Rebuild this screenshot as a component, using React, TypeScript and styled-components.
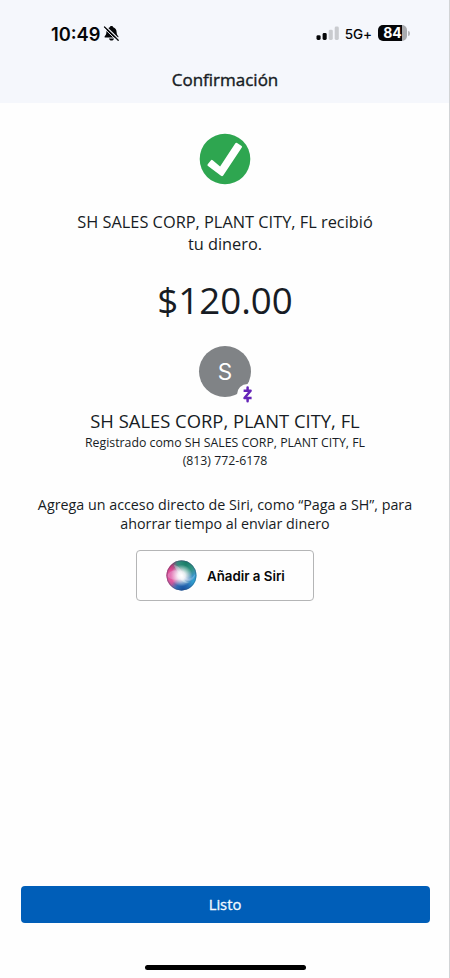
import React from "react";
import styled, { createGlobalStyle } from "styled-components";

const GlobalStyle = createGlobalStyle`
  *, *::before, *::after { box-sizing: border-box; }
  body { margin: 0; background: #fff; }
  button { font: inherit; }
`;

const Screen = styled.main`
  display: flex;
  flex-direction: column;
  width: 450px;
  height: 978px;
  overflow: hidden;
  border-right: 1px solid #d2d4d6;
  background: #fefefe;
  color: #171c24;
  font-family: "Open Sans", "Noto Sans", sans-serif;
`;

const Header = styled.header`
  flex: none;
  height: 103px;
  background: #f5f7fc;
`;

const StatusBar = styled.div`
  display: flex;
  align-items: center;
  justify-content: space-between;
  height: 58px;
  padding: 9px 39px 0 51px;
  color: #050608;
  font-family: Inter, sans-serif;
`;

const StatusGroup = styled.div`
  display: flex;
  align-items: center;
`;

const Clock = styled.span`
  margin-right: 2px;
  font-size: 18.3px;
  font-weight: 600;
  line-height: 22px;
`;

const Network = styled.span`
  margin: 1px 6px 0 6px;
  font-size: 13.5px;
  font-weight: 500;
  line-height: 18px;
  letter-spacing: -0.1px;
`;

const Battery = styled.div`
  display: flex;
  align-items: center;
  gap: 1px;
  margin-bottom: 1px;
  &::after {
    content: "";
    width: 2px;
    height: 5px;
    border-radius: 0 2px 2px 0;
    background: #b5b7bb;
  }
`;

const BatteryCell = styled.div`
  display: flex;
  align-items: center;
  justify-content: center;
  width: 29px;
  height: 16px;
  border-radius: 5px;
  background: linear-gradient(to right, #050608 84%, #a9abaf 84%);
  color: #fff;
  font-size: 14px;
  font-weight: 700;
  line-height: 16px;
`;

const Title = styled.h1`
  margin: 10px 0 0;
  padding-left: 1px;
  font-size: 17px;
  font-weight: 400;
  line-height: 24px;
  text-align: center;
  -webkit-text-stroke: 0.4px currentColor;
`;

const Content = styled.section`
  display: flex;
  flex: 1;
  flex-direction: column;
  align-items: center;
  padding: 30px 0 0 1px;
  text-align: center;
`;

const TextBlock = styled.p<{ $size: number; $line: number; $top: number }>`
  margin: ${(p) => p.$top}px 0 0;
  font-size: ${(p) => p.$size}px;
  line-height: ${(p) => p.$line}px;
  white-space: nowrap;
`;

const Avatar = styled.div`
  position: relative;
  display: flex;
  align-items: center;
  justify-content: center;
  width: 52px;
  height: 51px;
  margin-top: 21px;
  border-radius: 50%;
  background: #808386;
  color: #fff;
  font-family: Inter, sans-serif;
  font-size: 22.5px;
`;

const Badge = styled.span`
  position: absolute;
  left: 38px;
  top: 38px;
  display: flex;
  align-items: center;
  justify-content: center;
  width: 21px;
  height: 21px;
  border-radius: 50%;
  background: #fefefe;
`;

const SiriButton = styled.button`
  display: flex;
  align-items: center;
  width: 178px;
  height: 51px;
  margin-top: 17px;
  padding: 0 0 0 29px;
  gap: 10px;
  border: 1px solid #b4b5b6;
  border-radius: 4px;
  background: #fefefe;
  color: #080808;
  font-family: Inter, sans-serif;
  font-size: 13.3px;
  font-weight: 600;
  white-space: nowrap;
`;

const Footer = styled.footer`
  display: flex;
  flex: none;
  flex-direction: column;
  align-items: center;
  height: 92px;
  padding-left: 1px;
`;

const DoneButton = styled.button`
  width: 409px;
  height: 37px;
  padding: 0;
  border: 0;
  border-radius: 4px;
  background: #005eb8;
  color: #f3faff;
  font-size: 14.8px;
  font-weight: 400;
  line-height: 37px;
  -webkit-text-stroke: 0.3px currentColor;
`;

const HomeIndicator = styled.div`
  width: 161px;
  height: 5px;
  margin-top: 42px;
  border-radius: 3px;
  background: #000;
`;

const MutedBell = () => (
  <svg width="17" height="17" viewBox="0 0 17 17">
    <path d="M8.5 1.1c.9 0 1.500.5 1.700 1.200 2.100.7 3.300 2.300 3.400 4.600.1 2.200.6 3.100 1.500 4 .7.8.3 1.700-.6 1.700H2.500c-.9 0-1.300-.9-.6-1.700.9-.9 1.400-1.800 1.500-4 .1-2.300 1.300-3.900 3.400-4.600.2-.7.800-1.200 1.700-1.200Z" fill="#050608" />
    <path d="M6 13.500h5c-.2 1.300-1.200 2.100-2.500 2.100S6.200 14.800 6 13.500Z" fill="#050608" />
    <path d="M2.500 1.200 16 14.300" stroke="#f5f7fc" strokeWidth="1.300" />
    <path d="M1.500 2 15.200 15.300" stroke="#050608" strokeWidth="1.300" strokeLinecap="round" />
    <path d="M.8 3 14.200 16" stroke="#f5f7fc" strokeWidth="0.900" />
  </svg>
);

const Signal = () => (
  <svg width="23" height="15" viewBox="0 0 23 15">
    <rect x="0.500" y="9.200" width="4.100" height="4.800" rx="1.400" fill="#050608" />
    <rect x="6.600" y="7" width="4.100" height="7" rx="1.400" fill="#050608" />
    <rect x="12.700" y="3.700" width="4.100" height="10.300" rx="1.400" fill="#c9cbcf" />
    <rect x="18.700" y="0.500" width="4.100" height="13.500" rx="1.400" fill="#c9cbcf" />
  </svg>
);

const SuccessMark = () => (
  <svg width="52" height="52" viewBox="0 0 52 52">
    <circle cx="26" cy="26" r="25.300" fill="#2ea650" />
    <path
      d="M8.700 31.200 12 27.200Q12.800 26.400 13.700 27.200L21.100 33.400 36.200 10.400Q37 9.300 38.100 10L42.600 12.900Q43.500 13.600 42.800 14.600L24.200 42.400Q23.200 43.700 22 42.700L9 33Q7.900 32.200 8.700 31.200Z"
      fill="#fff"
    />
  </svg>
);

const ZelleMark = () => (
  <svg width="11" height="17" viewBox="0 0 11 17" fill="none" stroke="#6524b8" strokeWidth="2.500" strokeLinejoin="round">
    <path d="M1.600 4.700H8.600L2.500 12H9.600" />
    <path d="M5.600 1.600V4M5.600 12.800V15.300" strokeLinecap="round" />
  </svg>
);

const SiriOrb = () => (
  <svg width="31" height="31" viewBox="0 0 31 31">
    <defs>
      <linearGradient id="orbBase" x1="0.100" y1="0.300" x2="0.900" y2="0.700">
        <stop offset="0" stopColor="#b62a68" />
        <stop offset="0.450" stopColor="#7d6fa5" />
        <stop offset="1" stopColor="#2a9fd0" />
      </linearGradient>
      <radialGradient id="orbGreen" cx="0.650" cy="0.080" r="0.500">
        <stop offset="0" stopColor="#187d66" />
        <stop offset="0.550" stopColor="#2a947c" stopOpacity="0.900" />
        <stop offset="1" stopColor="#2d9a82" stopOpacity="0" />
      </radialGradient>
      <radialGradient id="orbPink" cx="0.200" cy="0.520" r="0.420">
        <stop offset="0" stopColor="#ee4c99" />
        <stop offset="0.400" stopColor="#ee5ca4" stopOpacity="0.800" />
        <stop offset="1" stopColor="#ee4c99" stopOpacity="0" />
      </radialGradient>
      <radialGradient id="orbBlue" cx="0.550" cy="0.980" r="0.420">
        <stop offset="0" stopColor="#164e9d" />
        <stop offset="0.500" stopColor="#2468b2" stopOpacity="0.900" />
        <stop offset="1" stopColor="#2870b8" stopOpacity="0" />
      </radialGradient>
      <radialGradient id="orbGlow" cx="0.500" cy="0.500" r="0.360">
        <stop offset="0" stopColor="#fff" />
        <stop offset="0.350" stopColor="#fff" stopOpacity="0.850" />
        <stop offset="1" stopColor="#fff" stopOpacity="0" />
      </radialGradient>
    </defs>
    {["orbBase", "orbGreen", "orbPink", "orbBlue"].map((id) => (
      <circle key={id} cx="15.500" cy="15.500" r="15" fill={`url(#${id})`} />
    ))}
    <path d="M2 14C8 8 13 10 17 15s8 5 12-1c0 6-5 8-10 6S7 22 2 17Z" fill="#d9dcff" opacity="0.280" />
    <path d="M8 5c5 1 8 5 9 11s5 7 8 6c-5 2-10 0-11-5S9 9 8 5Z" fill="#c9fff5" opacity="0.350" />
    <circle cx="15.500" cy="15.500" r="15" fill="url(#orbGlow)" />
    <circle cx="15.500" cy="15.500" r="14.600" fill="none" stroke="#384a70" strokeOpacity="0.450" strokeWidth="0.900" />
  </svg>
);

export default function App() {
  return (
    <>
      <GlobalStyle />
      <Screen>
        <Header>
          <StatusBar>
            <StatusGroup>
              <Clock>10:49</Clock>
              <MutedBell />
            </StatusGroup>
            <StatusGroup>
              <Signal />
              <Network>5G+</Network>
              <Battery>
                <BatteryCell>84</BatteryCell>
              </Battery>
            </StatusGroup>
          </StatusBar>
          <Title>Confirmación</Title>
        </Header>
        <Content>
          <SuccessMark />
          <TextBlock $size={16.35} $line={22} $top={26}>
            SH SALES CORP, PLANT CITY, FL recibió
            <br />
            tu dinero.
          </TextBlock>
          <TextBlock $size={36.7} $line={50} $top={20}>
            $120.00
          </TextBlock>
          <Avatar>
            S
            <Badge>
              <ZelleMark />
            </Badge>
          </Avatar>
          <TextBlock $size={18.4} $line={24} $top={12}>
            SH SALES CORP, PLANT CITY, FL
          </TextBlock>
          <TextBlock $size={12.3} $line={18} $top={1}>
            Registrado como SH SALES CORP, PLANT CITY, FL
            <br />
            (813) 772-6178
          </TextBlock>
          <TextBlock $size={14.3} $line={19} $top={25}>
            Agrega un acceso directo de Siri, como “Paga a SH”, para
            <br />
            ahorrar tiempo al enviar dinero
          </TextBlock>
          <SiriButton>
            <SiriOrb />
            Añadir a Siri
          </SiriButton>
        </Content>
        <Footer>
          <DoneButton>Listo</DoneButton>
          <HomeIndicator />
        </Footer>
      </Screen>
    </>
  );
}
